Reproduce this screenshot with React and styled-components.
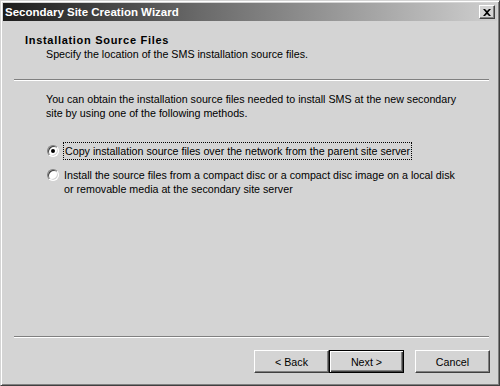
import React from "react";
import styled, { createGlobalStyle } from "styled-components";

const Global = createGlobalStyle`
  html, body { margin: 0; padding: 0; background: #d4d4d4; }
  * { box-sizing: border-box; }
`;

const Window = styled.div`
  width: 500px;
  height: 386px;
  display: flex;
  flex-direction: column;
  background: #d4d4d4;
  border: 1px solid;
  border-color: #d4d4d4 #404040 #404040 #d4d4d4;
  box-shadow: inset 1px 1px #ffffff, inset -1px -1px #808080;
  padding: 2px;
  font-family: "Liberation Sans", Arial, sans-serif;
  font-size: 10.7px;
  color: #000;
`;

const TitleBar = styled.div`
  height: 18px;
  flex: none;
  display: flex;
  align-items: center;
  justify-content: space-between;
  padding: 0 2px 0 2px;
  background: linear-gradient(to right, #1c1c1c 0%, #6a6a6a 40%, #cfcfcf 100%);
`;

const TitleText = styled.span`
  color: #fff;
  font-weight: bold;
  font-size: 11.5px;
`;

const CloseButton = styled.div`
  width: 16px;
  height: 14px;
  display: flex;
  align-items: center;
  justify-content: center;
  background: #d4d4d4;
  border: 1px solid;
  border-color: #fff #404040 #404040 #fff;
  box-shadow: inset -1px -1px #808080;
`;

const Header = styled.div`
  flex: none;
  padding: 12px 0 0 22px;
  height: 58px;
`;

const HeaderTitle = styled.div`
  font-weight: bold;
  font-size: 11px;
  letter-spacing: 0.7px;
  line-height: 14px;
`;

const HeaderSub = styled.div`
  padding-left: 21px;
  line-height: 14px;
`;

const Etched = styled.div`
  flex: none;
  margin: 0 8px 0 11px;
  height: 2px;
  border-top: 1px solid #808080;
  border-bottom: 1px solid #ffffff;
`;

const Body = styled.div`
  flex: 1;
  padding: 11px 20px 0 43px;
  display: flex;
  flex-direction: column;
`;

const Paragraph = styled.p`
  margin: 0 0 23px;
  line-height: 14px;
`;

const Option = styled.label`
  display: flex;
  align-items: flex-start;
  gap: 5px;
  margin-bottom: ${p => p.$mb || 0}px;
  padding-left: 1px;
`;

const Radio = styled.span`
  flex: none;
  width: 12px;
  height: 12px;
  margin-top: ${p => p.$mt || 0}px;
  border-radius: 50%;
  background: #fff;
  border: 1px solid;
  border-color: #808080 #ffffff #ffffff #808080;
  box-shadow: inset 1px 1px #404040, inset -1px -1px #d4d4d4;
  display: flex;
  align-items: center;
  justify-content: center;
  &::after {
    content: "";
    display: ${p => (p.$checked ? "block" : "none")};
    width: 4px;
    height: 4px;
    border-radius: 50%;
    background: #000;
  }
`;

const OptionText = styled.span`
  line-height: 14px;
  padding: ${p => (p.$focus ? "1px 1px" : "0")};
  outline: ${p => (p.$focus ? "1px dotted #000" : "none")};
`;

const Footer = styled.div`
  flex: none;
  display: flex;
  justify-content: flex-end;
  padding: 12px 7px 10px 0;
`;

const Buttons = styled.div`
  display: flex;
`;

const Button = styled.button`
  width: 75px;
  height: 23px;
  margin-left: ${p => p.$ml || 0}px;
  font-family: inherit;
  font-size: 10.7px;
  color: #000;
  background: #d4d4d4;
  padding: 0;
  border: 1px solid;
  border-color: ${p => (p.$default ? "#000" : "#fff #404040 #404040 #fff")};
  box-shadow: ${p =>
    p.$default
      ? "inset 1px 1px #fff, inset -1px -1px #404040, inset -2px -2px #808080"
      : "inset -1px -1px #808080"};
`;

export default function App() {
  return (
    <>
      <Global />
      <Window>
        <TitleBar>
          <TitleText>Secondary Site Creation Wizard</TitleText>
          <CloseButton>
            <svg width="8" height="7" viewBox="0 0 8 7">
              <path d="M0 0h2l2 2 2-2h2L5 3.5 8 7H6L4 5 2 7H0l3-3.5z" fill="#000" />
            </svg>
          </CloseButton>
        </TitleBar>
        <Header>
          <HeaderTitle>Installation Source Files</HeaderTitle>
          <HeaderSub>Specify the location of the SMS installation source files.</HeaderSub>
        </Header>
        <Etched />
        <Body>
          <Paragraph>
            You can obtain the installation source files needed to install SMS at the new secondary
            <br />
            site by using one of the following methods.
          </Paragraph>
          <Option $mb={9}>
            <Radio $checked $mt={2} />
            <OptionText $focus>Copy installation source files over the network from the parent site server</OptionText>
          </Option>
          <Option>
            <Radio $mt={1} />
            <OptionText>
              Install the source files from a compact disc or a compact disc image on a local disk
              <br />
              or removable media at the secondary site server
            </OptionText>
          </Option>
        </Body>
        <Etched />
        <Footer>
          <Buttons>
            <Button>&lt; Back</Button>
            <Button $default>Next &gt;</Button>
            <Button $ml={11}>Cancel</Button>
          </Buttons>
        </Footer>
      </Window>
    </>
  );
}
